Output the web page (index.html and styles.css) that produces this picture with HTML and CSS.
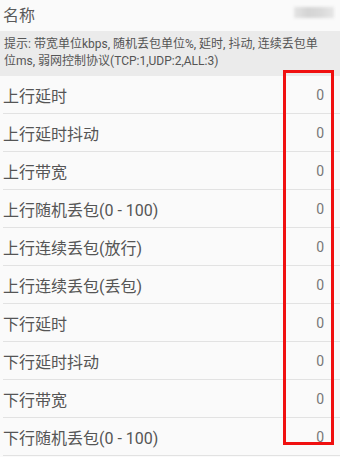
FILE: index.html
```html
<!DOCTYPE html>
<html lang="zh-CN">
<head>
<meta charset="utf-8">
<title>弱网设置</title>
<link rel="stylesheet" href="styles.css">
</head>
<body>
<div class="page">
  <div class="header">
    <span class="header-title">名称</span>
    <span class="header-blur"></span>
  </div>
  <div class="hint">提示: 带宽单位kbps, 随机丢包单位%, 延时, 抖动, 连续丢包单位ms, 弱网控制协议(TCP:1,UDP:2,ALL:3)</div>
  <div class="list">
    <div class="row"><span class="label">上行延时</span><span class="value">0</span></div>
    <div class="row"><span class="label">上行延时抖动</span><span class="value">0</span></div>
    <div class="row"><span class="label">上行带宽</span><span class="value">0</span></div>
    <div class="row"><span class="label">上行随机丢包(0 - 100)</span><span class="value">0</span></div>
    <div class="row"><span class="label">上行连续丢包(放行)</span><span class="value">0</span></div>
    <div class="row"><span class="label">上行连续丢包(丢包)</span><span class="value">0</span></div>
    <div class="row"><span class="label">下行延时</span><span class="value">0</span></div>
    <div class="row"><span class="label">下行延时抖动</span><span class="value">0</span></div>
    <div class="row"><span class="label">下行带宽</span><span class="value">0</span></div>
    <div class="row"><span class="label">下行随机丢包(0 - 100)</span><span class="value">0</span></div>
  </div>
  <div class="highlight"></div>
</div>
</body>
</html>
```

FILE: styles.css
```css
html, body {
  margin: 0;
  padding: 0;
  background: #fafafa;
}
body {
  font-family: Roboto, "Noto Sans CJK SC", sans-serif;
  color: #555;
  overflow: hidden;
}
.page {
  position: relative;
  width: 340px;
  height: 457px;
  overflow: hidden;
}
.header {
  height: 31px;
  display: flex;
  align-items: center;
  justify-content: space-between;
  padding: 0 6px 3px 3px;
  box-sizing: border-box;
}
.header-title {
  font-size: 16px;
  color: #5a5a5a;
}
.header-blur {
  width: 40px;
  height: 11px;
  margin-top: -3px;
  background: linear-gradient(90deg, #e4e4e4 0%, #d4d4d4 35%, #dadada 70%, #e6e6e6 100%);
  filter: blur(1.5px);
}
.hint {
  background: #ebebeb;
  height: 45px;
  box-sizing: border-box;
  padding: 5px 12px 0 4px;
  font-size: 12px;
  line-height: 17px;
  color: #555;
}
.list {
  margin-left: 3px;
}
.row {
  height: 38px;
  box-sizing: border-box;
  border-bottom: 1px solid #e2e2e2;
  display: flex;
  align-items: center;
  justify-content: space-between;
  padding: 0 16px 0 0;
}
.label {
  font-size: 16px;
  color: #555;
}
.value {
  font-size: 14px;
  color: #777;
}
.highlight {
  position: absolute;
  left: 283px;
  top: 70px;
  width: 51px;
  height: 375px;
  box-sizing: border-box;
  border: 3px solid #f01010;
}
```
